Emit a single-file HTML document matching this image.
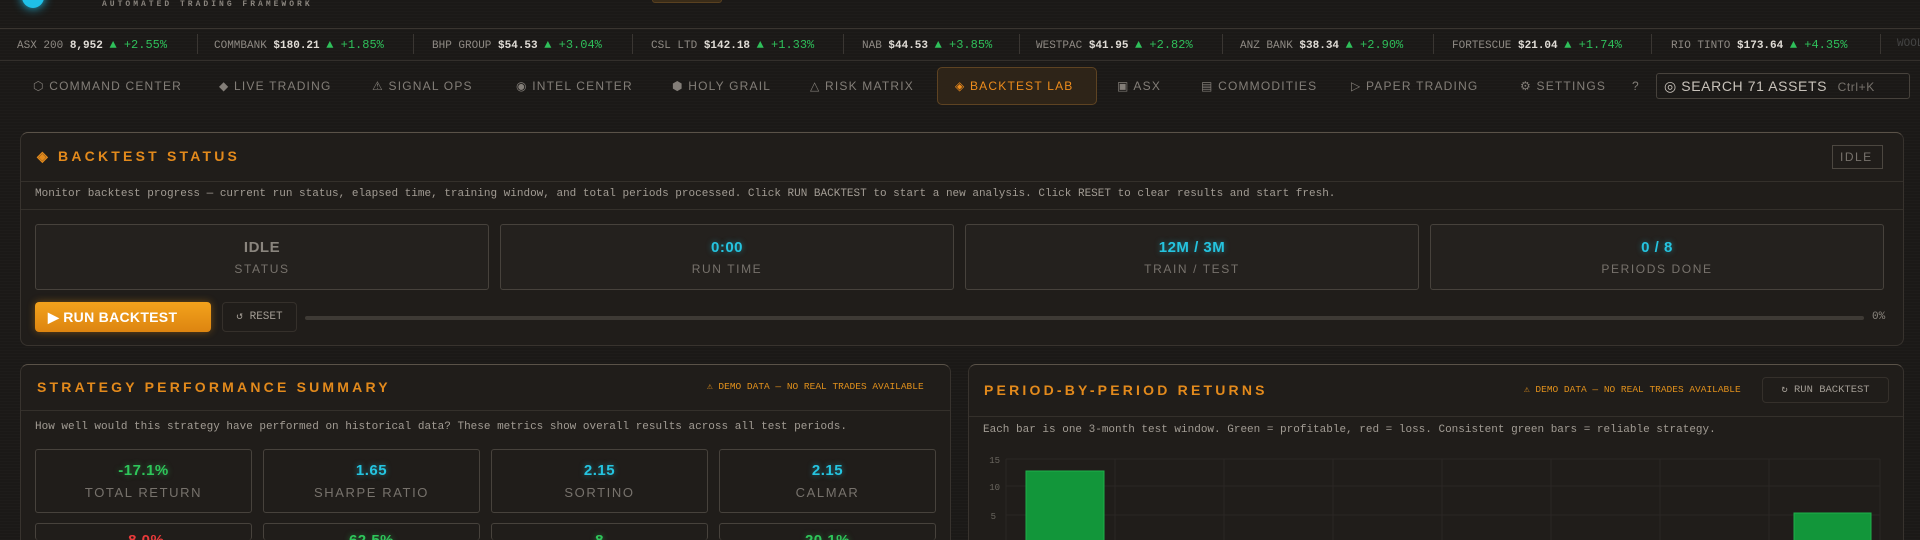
<!DOCTYPE html>
<html><head><meta charset="utf-8">
<style>
*{box-sizing:border-box;margin:0;padding:0}
html,body{width:1920px;height:540px;overflow:hidden;background:#1b1917}
#w{position:relative;width:1920px;height:540px;overflow:hidden;font-family:"Liberation Mono",monospace;color:#a8a29a;
background:#1b1917;background-image:repeating-linear-gradient(0deg,rgba(255,255,255,0.012) 0 1px,transparent 1px 3px);}
.a{position:absolute;white-space:nowrap}
.h{font-family:"Liberation Sans",sans-serif}
.tk{top:38px;font-size:11px;color:#8f8a84;letter-spacing:0}
.tk b{color:#e0dcd6;font-weight:bold}
.tk i{font-style:normal;color:#2fbf5a;font-size:12px}
.sep{top:34px;width:1px;height:20px;background:#3a3632}
.nav{top:79px;font-family:"Liberation Sans",sans-serif;font-size:12px;letter-spacing:1.2px;color:#837e78}
.panel{position:absolute;background:#201d1a;border:1px solid #38332e;border-radius:8px}
.box{position:absolute;border:1px solid #47423c;border-radius:3px;background:#24211e;text-align:center;overflow:hidden}
.v{font-family:"Liberation Sans",sans-serif;font-weight:bold;font-size:15px;letter-spacing:.5px}
.l{font-family:"Liberation Sans",sans-serif;font-size:12px;letter-spacing:1.6px;color:#77726c}
.t{font-family:"Liberation Sans",sans-serif;font-size:14px;letter-spacing:3.2px;color:#e38a1c;font-weight:bold}
.d{font-size:11px;color:#a29c94;letter-spacing:0}
.cy{color:#25c4e0;text-shadow:0 0 6px rgba(37,196,224,.5)}
.gr{color:#2ec65a;text-shadow:0 0 6px rgba(46,198,90,.5)}
</style></head><body><div id="w">
<div class="a" style="left:22px;top:-14px;width:22px;height:22px;border-radius:50%;background:#1fc0e8;box-shadow:0 0 10px #1fc0e8"></div>
<div class="a" style="left:102px;top:0px;font-size:8px;letter-spacing:3px;color:#8a857e;font-weight:bold">AUTOMATED TRADING FRAMEWORK</div>
<div class="a" style="left:652px;top:-6px;width:70px;height:9px;border-radius:3px;background:#3a2c18;border:1px solid #5a4120"></div>
<div class="a" style="left:0;top:28px;width:1920px;height:1px;background:#3a3530"></div>
<div class="a" style="left:0;top:60px;width:1920px;height:1px;background:#332f2b"></div>
<div class="a tk" style="left:17px">ASX 200 <b>8,952</b> <i>▲ +2.55%</i></div><div class="a sep" style="left:197px"></div>
<div class="a tk" style="left:214px">COMMBANK <b>$180.21</b> <i>▲ +1.85%</i></div><div class="a sep" style="left:413px"></div>
<div class="a tk" style="left:432px">BHP GROUP <b>$54.53</b> <i>▲ +3.04%</i></div><div class="a sep" style="left:632px"></div>
<div class="a tk" style="left:651px">CSL LTD <b>$142.18</b> <i>▲ +1.33%</i></div><div class="a sep" style="left:843px"></div>
<div class="a tk" style="left:862px">NAB <b>$44.53</b> <i>▲ +3.85%</i></div><div class="a sep" style="left:1019px"></div>
<div class="a tk" style="left:1036px">WESTPAC <b>$41.95</b> <i>▲ +2.82%</i></div><div class="a sep" style="left:1222px"></div>
<div class="a tk" style="left:1240px">ANZ BANK <b>$38.34</b> <i>▲ +2.90%</i></div><div class="a sep" style="left:1433px"></div>
<div class="a tk" style="left:1452px">FORTESCUE <b>$21.04</b> <i>▲ +1.74%</i></div><div class="a sep" style="left:1651px"></div>
<div class="a tk" style="left:1671px">RIO TINTO <b>$173.64</b> <i>▲ +4.35%</i></div><div class="a sep" style="left:1880px"></div>
<div class="a tk" style="left:1897px;color:#444">WOOL</div>
<div class="a nav" style="left:33px">⬡ COMMAND CENTER</div>
<div class="a nav" style="left:219px">◆ LIVE TRADING</div>
<div class="a nav" style="left:372px">⚠ SIGNAL OPS</div>
<div class="a nav" style="left:516px">◉ INTEL CENTER</div>
<div class="a nav" style="left:672px">⬢ HOLY GRAIL</div>
<div class="a nav" style="left:810px">△ RISK MATRIX</div>
<div class="a" style="left:937px;top:67px;width:160px;height:38px;border:1px solid #5e4322;border-radius:5px;background:#2e2418"></div>
<div class="a nav" style="left:955px;color:#ee8c1c">◈ BACKTEST LAB</div>
<div class="a nav" style="left:1117px">▣ ASX</div>
<div class="a nav" style="left:1201px">▤ COMMODITIES</div>
<div class="a nav" style="left:1351px">▷ PAPER TRADING</div>
<div class="a nav" style="left:1520px">⚙ SETTINGS</div>
<div class="a nav" style="left:1632px">?</div>
<div class="a" style="left:1656px;top:73px;width:254px;height:26px;border:1px solid #47423c;border-radius:3px"></div>
<div class="a h" style="left:1664px;top:78px;font-size:14px;color:#c8c2ba;letter-spacing:.6px">◎ SEARCH 71 ASSETS <span style="font-size:12px;color:#77726c;margin-left:6px">Ctrl+K</span></div>
<div class="panel" style="left:20px;top:132px;width:1884px;height:214px;border-top-color:#5a5248"></div>
<div class="a t" style="left:37px;top:148px">◈ BACKTEST STATUS</div>
<div class="a" style="left:1832px;top:145px;width:51px;height:24px;border:1px solid #4c4740"></div>
<div class="a h" style="left:1840px;top:150px;font-size:12px;letter-spacing:1.5px;color:#77726c">IDLE</div>
<div class="a" style="left:21px;top:181px;width:1882px;height:1px;background:#34302b"></div>
<div class="a d" style="left:35px;top:188px">Monitor backtest progress — current run status, elapsed time, training window, and total periods processed. Click RUN BACKTEST to start a new analysis. Click RESET to clear results and start fresh.</div>
<div class="a" style="left:21px;top:209px;width:1882px;height:1px;background:#34302b"></div>
<div class="box" style="left:35px;top:224px;width:454px;height:66px"><div class="v" style="margin-top:14px;color:#8a857e">IDLE</div><div class="l" style="margin-top:6px">STATUS</div></div>
<div class="box" style="left:500px;top:224px;width:454px;height:66px"><div class="v cy" style="margin-top:14px">0:00</div><div class="l" style="margin-top:6px">RUN TIME</div></div>
<div class="box" style="left:965px;top:224px;width:454px;height:66px"><div class="v cy" style="margin-top:14px">12M / 3M</div><div class="l" style="margin-top:6px">TRAIN / TEST</div></div>
<div class="box" style="left:1430px;top:224px;width:454px;height:66px"><div class="v cy" style="margin-top:14px">0 / 8</div><div class="l" style="margin-top:6px">PERIODS DONE</div></div>
<div class="a h" style="left:35px;top:302px;width:176px;height:30px;border-radius:4px;background:linear-gradient(#f3a21c,#dd8510);box-shadow:0 0 8px rgba(240,150,20,.4);color:#fff;font-weight:bold;font-size:14px;line-height:30px;padding-left:13px;letter-spacing:.3px">▶ RUN BACKTEST</div>
<div class="a" style="left:222px;top:302px;width:75px;height:30px;border:1px solid #35302b;border-radius:4px;font-size:11px;line-height:28px;text-align:center;color:#a29c94">↺ RESET</div>
<div class="a" style="left:305px;top:316px;width:1559px;height:4px;border-radius:2px;background:#3e3a35"></div>
<div class="a" style="left:1872px;top:311px;font-size:11px;color:#8a857e">0%</div>
<div class="panel" style="left:20px;top:364px;width:931px;height:176px;border-top-color:#5a5248;border-bottom:none;border-radius:8px 8px 0 0"></div>
<div class="a t" style="left:37px;top:379px">STRATEGY PERFORMANCE SUMMARY</div>
<div class="a" style="left:707px;top:381px;font-size:9.5px;color:#e0901c">⚠ DEMO DATA — NO REAL TRADES AVAILABLE</div>
<div class="a" style="left:21px;top:410px;width:929px;height:1px;background:#34302b"></div>
<div class="a d" style="left:35px;top:421px">How well would this strategy have performed on historical data? These metrics show overall results across all test periods.</div>
<div class="box" style="left:35px;top:449px;width:217px;height:64px;background:transparent"><div class="v gr" style="margin-top:12px">-17.1%</div><div class="l" style="margin-top:6px;font-size:13px">TOTAL RETURN</div></div>
<div class="box" style="left:263px;top:449px;width:217px;height:64px;background:transparent"><div class="v cy" style="margin-top:12px">1.65</div><div class="l" style="margin-top:6px;font-size:13px">SHARPE RATIO</div></div>
<div class="box" style="left:491px;top:449px;width:217px;height:64px;background:transparent"><div class="v cy" style="margin-top:12px">2.15</div><div class="l" style="margin-top:6px;font-size:13px">SORTINO</div></div>
<div class="box" style="left:719px;top:449px;width:217px;height:64px;background:transparent"><div class="v cy" style="margin-top:12px">2.15</div><div class="l" style="margin-top:6px;font-size:13px">CALMAR</div></div>
<div class="box" style="left:35px;top:523px;width:217px;height:17px;background:transparent;border-bottom:none"><div class="v" style="margin-top:8px;color:#e83a3a">-8.0%</div></div>
<div class="box" style="left:263px;top:523px;width:217px;height:17px;background:transparent;border-bottom:none"><div class="v gr" style="margin-top:8px">62.5%</div></div>
<div class="box" style="left:491px;top:523px;width:217px;height:17px;background:transparent;border-bottom:none"><div class="v gr" style="margin-top:8px">8</div></div>
<div class="box" style="left:719px;top:523px;width:217px;height:17px;background:transparent;border-bottom:none"><div class="v gr" style="margin-top:8px">20.1%</div></div>
<div class="panel" style="left:968px;top:364px;width:936px;height:176px;border-top-color:#5a5248;border-bottom:none;border-radius:8px 8px 0 0"></div>
<div class="a t" style="left:984px;top:382px">PERIOD-BY-PERIOD RETURNS</div>
<div class="a" style="left:1524px;top:384px;font-size:9.5px;color:#e0901c">⚠ DEMO DATA — NO REAL TRADES AVAILABLE</div>
<div class="a" style="left:1762px;top:377px;width:127px;height:26px;border:1px solid #35302b;border-radius:4px;font-size:10.5px;line-height:24px;text-align:center;color:#a29c94">↻ RUN BACKTEST</div>
<div class="a" style="left:969px;top:416px;width:934px;height:1px;background:#34302b"></div>
<div class="a d" style="left:983px;top:424px">Each bar is one 3-month test window. Green = profitable, red = loss. Consistent green bars = reliable strategy.</div>
<svg class="a" style="left:970px;top:450px" width="920" height="90">
<g stroke="#2a2724" stroke-width="1">
<line x1="36" y1="9" x2="910" y2="9"/><line x1="36" y1="36" x2="910" y2="36"/><line x1="36" y1="65" x2="910" y2="65"/>
<line x1="36" y1="9" x2="36" y2="90"/><line x1="145" y1="9" x2="145" y2="90"/><line x1="254" y1="9" x2="254" y2="90"/><line x1="363" y1="9" x2="363" y2="90"/><line x1="472" y1="9" x2="472" y2="90"/><line x1="581" y1="9" x2="581" y2="90"/><line x1="690" y1="9" x2="690" y2="90"/><line x1="799" y1="9" x2="799" y2="90"/><line x1="910" y1="9" x2="910" y2="90"/>
</g>
<g font-family="Liberation Mono" font-size="9" fill="#6a665f"><text x="30" y="13" text-anchor="end">15</text><text x="30" y="40" text-anchor="end">10</text><text x="26" y="69" text-anchor="end">5</text></g>
<rect x="56" y="21" width="78" height="75" fill="#12963a" stroke="#1fb04a"/>
<rect x="824" y="63" width="77" height="40" fill="#12963a" stroke="#1fb04a"/>
</svg>
</div></body></html>
